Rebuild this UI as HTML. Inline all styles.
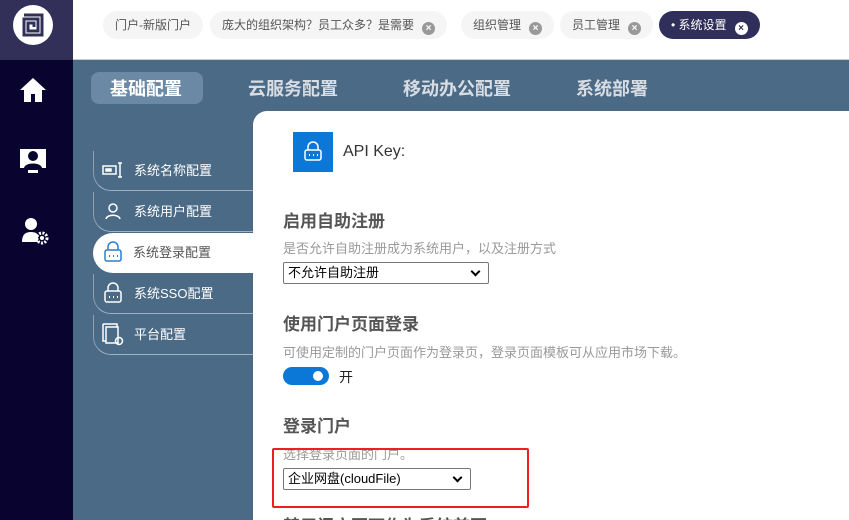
<!DOCTYPE html>
<html style="width:849px;height:520px;overflow:hidden"><head><meta charset="utf-8"><style>
*{margin:0;padding:0;box-sizing:border-box}
body{width:849px;height:520px;overflow:hidden;position:relative;font-family:"Liberation Sans","Noto Sans CJK SC",sans-serif;background:#4b6a86}
.side{position:absolute;left:0;top:0;width:73px;height:520px;background:#08042f}
.logo{position:absolute;left:0;top:0;width:73px;height:60px;background:#322f58}
.logo div{position:absolute;left:13px;top:5px;width:40px;height:40px;border-radius:50%;background:#fff}
.hdr{position:absolute;left:73px;top:0;width:776px;height:60px;background:#fff;border-bottom:1px solid #ccc}
.tag{position:absolute;top:11px;height:28px;border-radius:14px;background:#f5f5f5;font-size:12px;color:#555;line-height:28px;padding:0 12px}
.x{display:inline-block;width:13px;height:13px;border-radius:50%;background:#999;color:#fff;font-size:10px;line-height:13px;text-align:center;margin-left:8px;vertical-align:-2px;font-weight:bold}
.tabs span{position:absolute;top:76px;font-size:18px;font-weight:bold;color:#d8dde3;line-height:26px}
.act{position:absolute;left:91px;top:72px;width:112px;height:32px;border-radius:8px;background:#6b89a5}
.menu{position:absolute;left:93px;width:160px;height:40px;border-left:1px solid #8aa0b5;border-bottom:1px solid #9fb2c4;border-radius:0 0 0 18px;font-size:13px;color:#fff;line-height:40px;padding-left:40px}
.menu.on{background:#fff;color:#555;border:none;border-radius:20px 0 0 20px}
.panel{position:absolute;left:253px;top:111px;width:596px;height:409px;background:#fff;border-radius:14px 0 0 0;overflow:hidden}
h3{position:absolute;font-size:17px;color:#555;font-weight:bold;white-space:nowrap}
.d{position:absolute;font-size:13px;color:#999}
.sel{position:absolute;height:22px;border:1px solid #777;border-radius:2px;font-size:13px;color:#000;line-height:20px;padding-left:4px;background:#fff}
.sel:after{content:"";position:absolute;right:9px;top:5px;width:5px;height:5px;border-right:2px solid #000;border-bottom:2px solid #000;transform:rotate(45deg)}
</style></head><body>
<div class="side"></div>
<div class="logo"><div><svg width="40" height="40" viewBox="0 0 40 40"><path d="M11 10h18v20H11V14h14v12H15v-8h6v4" fill="none" stroke="#322f58" stroke-width="3"/></svg></div></div>
<svg style="position:absolute;left:18px;top:76px" width="30" height="28" viewBox="0 0 30 28"><path d="M15 2L2 14h4v12h7v-8h4v8h7V14h4z" fill="#fff"/></svg>
<svg style="position:absolute;left:18px;top:146px" width="30" height="30" viewBox="0 0 30 30"><rect x="2" y="3" width="26" height="19" fill="#fff"/><circle cx="15" cy="10" r="5" fill="#08042f"/><path d="M6 22c1-6 17-6 18 0z" fill="#08042f"/><rect x="10" y="24" width="10" height="3" fill="#fff"/></svg>
<svg style="position:absolute;left:20px;top:216px" width="30" height="30" viewBox="0 0 30 30"><circle cx="11" cy="8" r="6" fill="#fff"/><path d="M2 26c0-8 4-10 9-10s7 2 7 4v6z" fill="#fff"/><circle cx="22" cy="22" r="5" fill="none" stroke="#fff" stroke-width="3" stroke-dasharray="2 1.4"/><circle cx="22" cy="22" r="2" fill="#fff"/></svg>
<div class="hdr"></div>
<div class="tag" style="left:103px">门户-新版门户</div>
<div class="tag" style="left:210px">庞大的组织架构？员工众多？是需要<span class="x">×</span></div>
<div class="tag" style="left:461px">组织管理<span class="x">×</span></div>
<div class="tag" style="left:560px">员工管理<span class="x">×</span></div>
<div class="tag" style="left:659px;background:#302e5a;color:#fff">• 系统设置<span class="x" style="background:#fff;color:#302e5a">×</span></div>
<div class="act"></div>
<div class="tabs"><span style="left:110px;color:#fff">基础配置</span><span style="left:248px">云服务配置</span><span style="left:403px">移动办公配置</span><span style="left:576px">系统部署</span></div>
<div class="menu" style="top:151px">系统名称配置</div>
<div class="menu" style="top:192px">系统用户配置</div>
<div class="menu on" style="top:233px">系统登录配置</div>
<div class="menu" style="top:274px">系统SSO配置</div>
<div class="menu" style="top:315px">平台配置</div>
<svg style="position:absolute;left:102px;top:161px" width="22" height="18" viewBox="0 0 22 18" fill="none" stroke="#fff" stroke-width="1.5"><rect x="1" y="5" width="13" height="8"/><rect x="4" y="8" width="5" height="2" fill="#fff"/><path d="M16 2h4M18 2v14M16 16h4"/></svg>
<svg style="position:absolute;left:104px;top:202px" width="18" height="18" viewBox="0 0 18 18" fill="none" stroke="#fff" stroke-width="1.5"><circle cx="9" cy="6" r="4"/><path d="M2 17c1-5 13-5 14 0"/></svg>
<svg style="position:absolute;left:103px;top:241px" width="20" height="22" viewBox="0 0 20 22" fill="none" stroke="#2a7fd0" stroke-width="1.5"><path d="M5 9V6a5 5 0 0110 0v3"/><rect x="2" y="9" width="16" height="11" rx="2"/><path d="M6 15h1M10 15h1M14 15h1" stroke-width="2"/></svg>
<svg style="position:absolute;left:103px;top:282px" width="20" height="22" viewBox="0 0 20 22" fill="none" stroke="#fff" stroke-width="1.5"><path d="M5 9V6a5 5 0 0110 0v3"/><rect x="2" y="9" width="16" height="11" rx="2"/><path d="M6 15h1M10 15h1M14 15h1" stroke-width="2"/></svg>
<svg style="position:absolute;left:101px;top:322px" width="24" height="24" viewBox="0 0 24 24" fill="none" stroke="#fff" stroke-width="1.5"><path d="M2 2h14v3M2 2v17h3"/><rect x="5" y="5" width="12" height="16"/><circle cx="18" cy="19" r="3.5"/></svg>
<div class="panel"><h3 style="left:30px;top:401px">禁用门户页面作为系统首页</h3></div>
<div style="position:absolute;left:293px;top:132px;width:40px;height:40px;background:#0b78d8"></div>
<svg style="position:absolute;left:303px;top:141px" width="20" height="22" viewBox="0 0 20 22" fill="none" stroke="#fff" stroke-width="1.5"><path d="M5 9V6a5 5 0 0110 0v3"/><rect x="2" y="9" width="16" height="10" rx="2"/><path d="M6 14h1M10 14h1M14 14h1" stroke-width="2"/></svg>
<div style="position:absolute;left:343px;top:143px;font-size:16px;color:#333">API Key:</div>
<h3 style="left:283px;top:207px">启用自助注册</h3>
<div class="d" style="left:283px;top:238px">是否允许自助注册成为系统用户，以及注册方式</div>
<div class="sel" style="left:283px;top:262px;width:206px">不允许自助注册</div>
<h3 style="left:283px;top:310px">使用门户页面登录</h3>
<div class="d" style="left:283px;top:342px">可使用定制的门户页面作为登录页，登录页面模板可从应用市场下载。</div>
<div style="position:absolute;left:283px;top:367px;width:46px;height:18px;border-radius:9px;background:#0b78d8"></div>
<div style="position:absolute;left:313px;top:371px;width:10px;height:10px;border-radius:50%;background:#fff"></div>
<div style="position:absolute;left:339px;top:367px;font-size:14px;color:#222">开</div>
<h3 style="left:283px;top:412px">登录门户</h3>
<div class="d" style="left:283px;top:444px">选择登录页面的门户。</div>
<div class="sel" style="left:283px;top:468px;width:188px">企业网盘(cloudFile)</div>
<div style="position:absolute;left:272px;top:448px;width:257px;height:60px;border:2px solid #f01e1e;border-radius:2px"></div>
</body></html>
